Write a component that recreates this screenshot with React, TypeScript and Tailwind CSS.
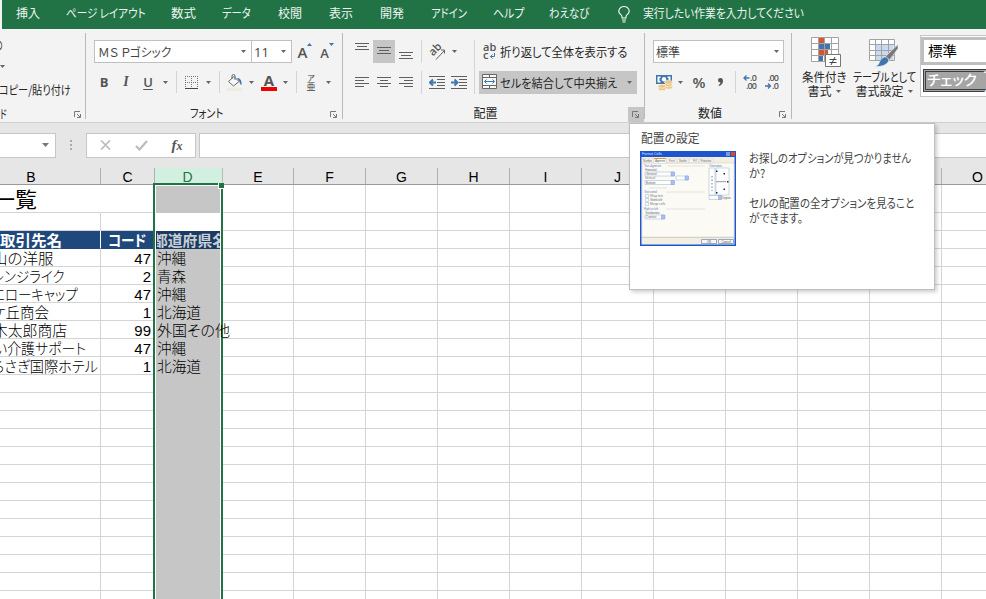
import { useLayoutEffect, useRef, useState, type ReactNode } from "react";
import clsx from "clsx";

// Keeps a label at a fixed width, squeezing the glyphs like a UI font does
const Fit = ({ w, children, className }: { w: number; children: string; className?: string }) => {
  const ref = useRef<HTMLSpanElement>(null);
  const [scale, setScale] = useState(1);

  useLayoutEffect(() => {
    if (ref.current) setScale(w / ref.current.offsetWidth);
  }, [w, children]);

  return (
    <span className={clsx("inline-block shrink-0 whitespace-nowrap", className)} style={{ width: w }}>
      <span
        ref={ref}
        className="inline-block origin-left [font-feature-settings:'palt']"
        style={{ transform: `scaleX(${scale})` }}
      >
        {children}
      </span>
    </span>
  );
};

const Caret = () => (
  <svg width="5" height="3" viewBox="0 0 5 3" className="shrink-0">
    <path d="M0 0h5L2.5 3z" fill="#666" />
  </svg>
);

const Cell = ({ className, children }: { className: string; children?: ReactNode }) => (
  <div className={clsx("flex h-full shrink-0 items-center justify-center", className)}>{children}</div>
);

const Sep = ({ className }: { className: string }) => (
  <Cell className={className}>
    <div className="h-full w-px bg-[#d4d4d4]" />
  </Cell>
);

const LauncherIcon = () => (
  <svg width="8" height="8" viewBox="0 0 8 8" fill="none" stroke="#777">
    <path d="M.5 6V.5H6M3 3l3 3M6.500 3v3.500H3" />
  </svg>
);

const Group = ({
  label,
  labelWidth,
  className,
  hovered,
  children,
}: {
  label: string;
  labelWidth: number;
  className: string;
  hovered?: boolean;
  children: ReactNode;
}) => (
  <div className={clsx("flex shrink-0 flex-col", className)}>
    <div className="flex h-[76px] shrink-0 flex-col">{children}</div>
    <div className="flex h-[17px] items-stretch">
      <div className="flex flex-1 items-center justify-center pb-px">
        <Fit w={labelWidth}>{label}</Fit>
      </div>
      <div className={clsx("mt-[2px] flex w-[16px] items-center justify-center", hovered && "bg-[#c6c6c6]")}>
        <LauncherIcon />
      </div>
    </div>
  </div>
);

const GroupLine = () => <div className="mt-[4px] h-[86px] w-px shrink-0 bg-[#b9b9b9]" />;

const Lines = ({ rows, size = 14 }: { rows: [number, number, number][]; size?: number }) => (
  <svg width={size} height="23" viewBox={`0 0 ${size} 23`} stroke="#5f5f5f">
    {rows.map(([x, y, w]) => (
      <path key={y} d={`M${x} ${y + 0.5}h${w}`} />
    ))}
  </svg>
);

const tabs = [
  { label: "挿入", width: 24, gap: "ml-[14px]" },
  { label: "ページ レイアウト", width: 80, gap: "ml-[26px]" },
  { label: "数式", width: 25, gap: "ml-[25px]" },
  { label: "データ", width: 29, gap: "ml-[26px]" },
  { label: "校閲", width: 24, gap: "ml-[27px]" },
  { label: "表示", width: 24, gap: "ml-[27px]" },
  { label: "開発", width: 24, gap: "ml-[27px]" },
  { label: "アドイン", width: 36, gap: "ml-[27px]" },
  { label: "ヘルプ", width: 31, gap: "ml-[26px]" },
  { label: "わえなび", width: 40, gap: "ml-[25px]" },
];

const TabBar = () => (
  <nav className="ml-[2px] flex h-[29px] shrink-0 items-center bg-[#217346] pb-[3px] text-[12px] text-[#eef5f0]">
    {tabs.map((tab) => (
      <div key={tab.label} className={clsx("flex", tab.gap)}>
        <Fit w={tab.width}>{tab.label}</Fit>
      </div>
    ))}
    <svg width="12" height="17" viewBox="0 0 12 17" fill="none" stroke="#fff" strokeWidth="1.1" className="mt-[3px] ml-[29px]">
      <path d="M4 12v-1.500C4 9 .8 8 .8 5.200a5.200 4.700 0 0 1 10.400 0C11.200 8 8 9 8 10.500V12zM4 14h4M4.500 16h3" />
    </svg>
    <Fit w={161} className="ml-[13px]">実行したい作業を入力してください</Fit>
  </nav>
);

const ClipboardGroup = () => (
  <div className="flex w-[85px] shrink-0 flex-col overflow-hidden">
    <div className="mt-[7px] flex h-[18px] items-center">
      <Fit w={8} className="-ml-[5px]">の</Fit>
    </div>
    <div className="mt-[9px] flex h-[6px] items-center">
      <Caret />
    </div>
    <div className="mt-[12px] flex h-[18px] items-center">
      <Fit w={72} className="-ml-px">コピー/貼り付け</Fit>
    </div>
    <div className="mt-[6px] flex h-[17px] items-center">
      <Fit w={7}>ド</Fit>
      <div className="mt-[2px] ml-[67px]">
        <LauncherIcon />
      </div>
    </div>
  </div>
);

const FontGroup = () => (
  <Group label="フォント" labelWidth={33} className="w-[256px]">
    <div className="mt-[11px] flex h-[23px] items-center pl-[8px]">
      <div className="flex h-full w-[158px] items-center justify-between border border-[#c0c0c0] bg-white pr-[5px] pl-[3px] text-[#444]">
        <Fit w={73}>ＭＳ Ｐゴシック</Fit>
        <Caret />
      </div>
      <div className="-ml-px flex h-full w-[41px] items-center justify-between border border-[#c0c0c0] bg-white pr-[5px] pl-[2px] font-['Open_Sans',sans-serif] text-[#444]">
        <Fit w={15} className="text-[13px]">11</Fit>
        <Caret />
      </div>
      <Cell className="ml-[5px] w-[16px]">
        <span className="mt-[2px] font-['Open_Sans',sans-serif] text-[15px] leading-none font-semibold text-[#555]">A</span>
        <svg width="5" height="3" viewBox="0 0 5 3" className="mb-[14px]"><path d="M0 3h5L2.500 0z" fill="#3e76ad" /></svg>
      </Cell>
      <Cell className="ml-[6px] w-[16px]">
        <span className="mt-[3px] font-['Open_Sans',sans-serif] text-[13px] leading-none font-semibold text-[#555]">A</span>
        <svg width="5" height="3" viewBox="0 0 5 3" className="mb-[14px]"><path d="M0 0h5L2.500 3z" fill="#3e76ad" /></svg>
      </Cell>
    </div>
    <div className="mt-[8px] flex h-[22px] items-center pl-[7px] font-['Open_Sans',sans-serif] text-[13px] text-[#555]">
      <Cell className="w-[22px] font-bold">B</Cell>
      <Cell className="w-[22px] font-['Liberation_Serif',serif] text-[14px] font-bold italic">I</Cell>
      <Cell className="w-[22px] font-semibold underline underline-offset-2">U</Cell>
      <Cell className="w-[12px]"><Caret /></Cell>
      <Sep className="w-[10px]" />
      <Cell className="w-[21px]">
        <svg width="13" height="13" viewBox="0 0 13 13" fill="none" stroke="#777">
          <path strokeDasharray="1 1" d="M0 .5h13M0 6.500h13M.5 0v13M6.500 0v13M12.500 0v13" />
          <path stroke="#444" d="M0 12.500h13" />
        </svg>
      </Cell>
      <Cell className="w-[12px]"><Caret /></Cell>
      <Sep className="w-[10px]" />
      <Cell className="w-[22px]">
        <svg width="16" height="17" viewBox="0 0 16 17" fill="none" stroke="#666">
          <path fill="#f9f9f9" d="M1.500 7.500 7 2.500l5 5-5.500 4.500zM5 5V2q0-1.500 1.500-1.500T8 2v4" />
          <path fill="#3e76ad" stroke="none" d="M10 4c3 0 5 2 4.500 7q-2-.5-2-3.500z" />
          <path fill="#eeece1" stroke="none" d="M0 13.500h15V17H0z" />
        </svg>
      </Cell>
      <Cell className="w-[11px]"><Caret /></Cell>
      <Cell className="w-[24px] flex-col">
        <span className="text-[15px] leading-[13px] font-bold">A</span>
        <div className="h-[4px] w-[16px] bg-[#f00000]" />
      </Cell>
      <Cell className="w-[9px]"><Caret /></Cell>
      <Sep className="w-[12px]" />
      <Cell className="w-[18px] flex-col font-['Noto_Sans_CJK_JP',sans-serif] text-[#444]">
        <span className="text-[8px] leading-[8px]">ア</span>
        <span className="text-[9px] leading-[9px]">亜</span>
      </Cell>
      <Cell className="ml-[2px] w-[12px]"><Caret /></Cell>
    </div>
  </Group>
);

const IndentIcon = ({ right }: { right?: boolean }) => (
  <svg width="17" height="15" viewBox="0 0 17 15" fill="none" stroke="#5f5f5f">
    <path d="M0 1.500h16M8 4.500h8M8 7.500h8M8 10.500h8M0 13.500h16" />
    <path stroke="#3e76ad" strokeWidth="2" d={right ? "M0 7.500h6M3.500 4.500l3 3-3 3" : "M7 7.500H1M4 4.500l-3 3 3 3"} />
  </svg>
);

const AlignmentGroup = () => (
  <Group label="配置" labelWidth={24} className="w-[301px]" hovered>
    <div className="mt-[11px] flex h-[54px]">
      <div className="flex w-[131px] shrink-0 flex-col justify-between">
        <div className="flex h-[23px] pl-[8px]">
          <Cell className="w-[22px]"><Lines rows={[[0, 3, 14], [2, 6, 10], [0, 9, 14]]} /></Cell>
          <Cell className="w-[22px] bg-[#c6c6c6]"><Lines rows={[[0, 7, 14], [2, 10, 10], [0, 13, 14]]} /></Cell>
          <Cell className="w-[22px]"><Lines rows={[[0, 12, 14], [2, 15, 10], [0, 18, 14]]} /></Cell>
          <Sep className="w-[9px]" />
          <Cell className="w-[22px]">
            <svg width="18" height="18" viewBox="0 0 18 18" fill="none" stroke="#5f5f5f">
              <text x="0" y="0" transform="translate(5 13.500) rotate(-45)" fill="#555" stroke="none" fontSize="11" fontWeight="600" fontFamily="Open Sans, sans-serif">ab</text>
              <path d="M8 16.500l8.500-9M13 7h3.500v3.500" />
            </svg>
          </Cell>
          <Cell className="w-[12px]"><Caret /></Cell>
        </div>
        <div className="flex h-[23px] pl-[8px]">
          <Cell className="w-[22px]"><Lines rows={[[0, 6, 14], [0, 9, 9], [0, 12, 14], [0, 15, 9]]} /></Cell>
          <Cell className="w-[22px]"><Lines rows={[[0, 6, 14], [3, 9, 8], [0, 12, 14], [3, 15, 8]]} /></Cell>
          <Cell className="w-[22px]"><Lines rows={[[0, 6, 14], [5, 9, 9], [0, 12, 14], [5, 15, 9]]} /></Cell>
          <Sep className="w-[9px]" />
          <Cell className="w-[23px]"><IndentIcon /></Cell>
          <Cell className="w-[21px]"><IndentIcon right /></Cell>
        </div>
      </div>
      <div className="flex flex-1 flex-col justify-between border-l border-[#d4d4d4]">
        <div className="flex h-[23px] items-center pl-[4px]">
          <Cell className="w-[21px]">
            <svg width="14" height="18" viewBox="0 0 14 18" fill="#555" className="mb-[2px]">
              <text x="0" y="9" fontSize="11" fontWeight="600" fontFamily="Open Sans, sans-serif">ab</text>
              <text x="0" y="17" fontSize="11" fontWeight="600" fontFamily="Open Sans, sans-serif">c</text>
              <path d="M11.500 11v3.500h-4M9.500 12.500l-2 2 2 2" fill="none" stroke="#3e76ad" />
            </svg>
          </Cell>
          <Fit w={128}>折り返して全体を表示する</Fit>
        </div>
        <div className="ml-[4px] flex h-[23px] w-[158px] items-center bg-[#c6c6c6]">
          <Cell className="w-[21px] pb-[2px]">
            <svg width="15" height="15" viewBox="0 0 15 15" fill="#f8f8f8" stroke="#666">
              <path d="M.5.5h14v14H.5zM.5 3.500h14M.5 11.500h14M7.500.5v3M7.500 11.500v3" />
              <path d="M2.500 7.500h10M4.500 5.500l-2 2 2 2M10.500 5.500l2 2-2 2" fill="none" stroke="#3e76ad" />
            </svg>
          </Cell>
          <Fit w={117}>セルを結合して中央揃え</Fit>
          <Cell className="ml-[5px] w-[14px]"><Caret /></Cell>
        </div>
      </div>
    </div>
  </Group>
);

const DecimalIcon = ({ more }: { more?: boolean }) => (
  <svg width="16" height="16" viewBox="0 0 16 16" fill="#555" fontSize="9" fontWeight="600" fontFamily="Open Sans, sans-serif">
    <text x={more ? "7" : "3"} y="7" textLength={more ? 7 : 11}>{more ? ".0" : ".00"}</text>
    <text x={more ? "3" : "7"} y="15" textLength={more ? 11 : 7}>{more ? ".00" : ".0"}</text>
    <path
      d={more ? "M6.500 4H1M3.500 1.500 1 4l2.500 2.500" : "M0 12h5.500M3 9.500 5.500 12 3 14.500"}
      fill="none"
      stroke="#3e76ad"
      strokeWidth="1.300"
    />
  </svg>
);

const NumberGroup = () => (
  <Group label="数値" labelWidth={24} className="w-[146px]">
    <div className="mt-[11px] ml-[8px] flex h-[23px] w-[131px] items-center justify-between border border-[#c0c0c0] bg-white pr-[4px] pl-[2px] text-[#444]">
      <Fit w={24}>標準</Fit>
      <Caret />
    </div>
    <div className="mt-[8px] flex h-[22px] items-center pl-[8px] text-[#555]">
      <Cell className="w-[22px]">
        <svg width="17" height="17" viewBox="0 0 17 17">
          <path fill="#3e76ad" d="M0 1h16v9H0z" />
          <path fill="#fff" d="M1.500 2.500h3V4h-1v3h1v1.500h-3zM14.500 2.500h-3V4h1v2h2z" />
          <circle cx="8" cy="5.300" r="2.200" fill="#fff" />
          <g fill="#efc37b" stroke="#f6f3ec" strokeWidth=".8">
            <ellipse cx="12.500" cy="13.300" rx="4" ry="1.900" />
            <ellipse cx="12.500" cy="10.800" rx="4" ry="1.900" />
            <ellipse cx="12.500" cy="8.300" rx="4" ry="1.900" />
            <ellipse cx="6" cy="14.800" rx="4" ry="1.900" />
            <ellipse cx="6" cy="12.300" rx="4" ry="1.900" />
          </g>
        </svg>
      </Cell>
      <Cell className="w-[10px]"><Caret /></Cell>
      <Cell className="ml-[3px] w-[22px] font-['Open_Sans',sans-serif] text-[15px] font-semibold">%</Cell>
      <Cell className="w-[20px]">
        <svg width="5" height="8" viewBox="0 0 5 8" className="mb-px"><path d="M2.500 0Q5 0 5 3 5 6.500 1 8L.5 7q2-1 2-2.500Q0 4.500 0 2.200T2.500 0" fill="#555" /></svg>
      </Cell>
      <Sep className="w-[10px]" />
      <Cell className="w-[22px]"><DecimalIcon more /></Cell>
      <Cell className="w-[22px]"><DecimalIcon /></Cell>
    </div>
  </Group>
);

const StylesGroup = () => (
  <div className="flex flex-1 overflow-hidden">
    <div className="mt-[8px] ml-[9px] flex w-[46px] shrink-0 flex-col items-center">
      <svg width="30" height="30" viewBox="0 0 30 30" className="ml-[3px]">
        <path fill="#fff" d="M.5.500h27v24H.5z" />
        <path fill="#d65532" d="M8 1h5v5H8zM8 13h9v6H8z" />
        <path fill="#3e76ad" d="M8 7h11v5H8zM8 19h4v5H8z" />
        <path fill="none" stroke="#a3a3a3" d="M.5.500h27v24H.5zM.5 6.500h27M.5 12.500h27M.5 18.500h27M7.500.500v24M13.500.500v24M20.500.500v24" />
        <path fill="#fff" stroke="#777" d="M14.500 17.500h15v12h-15z" />
        <path fill="none" stroke="#444" d="M18.500 22.500h7M18.500 25.500h7M24 20l-4 8" />
      </svg>
      <div className="mt-[3px] flex h-[14px] items-center"><Fit w={45}>条件付き</Fit></div>
      <div className="flex h-[14px] items-center gap-[4px]"><Fit w={24}>書式</Fit><Caret /></div>
    </div>
    <div className="mt-[8px] ml-[4px] flex w-[66px] shrink-0 flex-col items-center">
      <svg width="30" height="30" viewBox="0 0 30 30">
        <path fill="#fff" d="M.5 2.500h24v21H.5z" />
        <path fill="#c8daf0" d="M6.500 7.500h18v16h-18z" />
        <path fill="none" stroke="#a3a3a3" d="M.5 2.500h25v21H.5zM.5 7.500h25M.5 13.500h25M.5 18.500h25M6.500 2.500v21M12.500 2.500v21M19.500 2.500v21" />
        <path fill="#777" stroke="#eee" strokeWidth=".6" d="M29 7.500v4L20.500 23l-4.500-3z" />
        <path fill="#3e76ad" stroke="#eee" strokeWidth=".6" d="M15 20q5-.5 4.500 4.500Q16 30 6 29.500q4-1.500 4.500-4.500T15 20" />
      </svg>
      <div className="mt-[3px] flex h-[14px] items-center"><Fit w={63}>テーブルとして</Fit></div>
      <div className="flex h-[14px] items-center gap-[4px]"><Fit w={48}>書式設定</Fit><Caret /></div>
    </div>
    <div className="mt-[6px] ml-[3px] flex h-[62px] w-[80px] shrink-0 flex-col border border-[#c6c6c6] bg-white font-['Noto_Sans_CJK_JP',sans-serif] text-[14px] text-black">
      <div className="mt-px flex h-[28px] items-center border-[3px] border-[#bfbfbf] pb-[3px] pl-[4px]">
        <Fit w={29}>標準</Fit>
      </div>
      <div className="mt-[4px] ml-[2px] flex h-[23px] items-center border-[3px] border-double border-[#3f3f3f] bg-[#a5a5a5] pb-[4px] pl-px text-white">
        <Fit w={50} className="font-medium">チェック</Fit>
        <span className="ml-[6px]">セル</span>
      </div>
    </div>
  </div>
);

const FormulaBar = () => (
  <div className="flex h-[45px] shrink-0 bg-[#e6e6e6] pt-[10px]">
    <div className="flex h-[25px] w-[56px] items-center justify-end border border-l-0 border-[#c6c6c6] bg-white pr-[6px] pb-[2px]">
      <svg width="7" height="4" viewBox="0 0 7 4"><path d="M0 0h7L3.500 4z" fill="#777" /></svg>
    </div>
    <div className="flex h-[25px] w-[30px] flex-col items-center justify-center gap-[2px] pb-px">
      <i className="size-[2px] bg-[#aaa]" />
      <i className="size-[2px] bg-[#aaa]" />
      <i className="size-[2px] bg-[#aaa]" />
    </div>
    <div className="flex h-[25px] w-[110px] items-center border border-[#c6c6c6] bg-white pb-px">
      <Cell className="w-[36px]">
        <svg width="11" height="10" viewBox="0 0 11 10" stroke="#bcbcbc" strokeWidth="1.700"><path d="M1 .5l9 9M10 .5l-9 9" /></svg>
      </Cell>
      <Cell className="w-[36px]">
        <svg width="13" height="11" viewBox="0 0 13 11" fill="none" stroke="#bcbcbc" strokeWidth="2.200"><path d="M1 6l3.500 3.500L12 1" /></svg>
      </Cell>
      <Cell className="w-[36px] pb-px font-['Liberation_Serif',serif] text-[15px] font-bold text-[#555] italic">
        f<span className="mt-[3px] text-[12px]">x</span>
      </Cell>
    </div>
    <div className="ml-[3px] h-[25px] flex-1 border border-r-0 border-[#c6c6c6] bg-white" />
  </div>
);

const columns = [
  { name: "B", width: "w-[101px]", pad: "pr-[38px]" },
  { name: "C", width: "w-[54px]", pad: "" },
  { name: "D", width: "w-[68px]", pad: "pr-[2px]" },
  { name: "E", width: "w-[71px]", pad: "" },
  ...["F", "G", "H", "I", "J", "K", "L", "M", "N", "O"].map((name) => ({ name, width: "w-[72px]", pad: "" })),
];

const records = [
  { name: "山の洋服", shift: "-ml-[8px]", width: 61, code: "47", pref: "沖縄", prefWidth: 29 },
  { name: "レンジライク", shift: "-ml-[8px]", width: 73, code: "2", pref: "青森", prefWidth: 29 },
  { name: "エローキャップ", shift: "-ml-[8px]", width: 86, code: "47", pref: "沖縄", prefWidth: 29 },
  { name: "ケ丘商会", shift: "-ml-[8px]", width: 57, code: "1", pref: "北海道", prefWidth: 44 },
  { name: "木太郎商店", shift: "-ml-[7px]", width: 74, code: "99", pref: "外国その他", prefWidth: 73 },
  { name: "い介護サポート", shift: "-ml-[6px]", width: 92, code: "47", pref: "沖縄", prefWidth: 29 },
  { name: "らさぎ国際ホテル", shift: "-ml-[8px]", width: 106, code: "1", pref: "北海道", prefWidth: 44 },
];

const Row = ({
  height,
  b,
  c,
  d,
  bClass,
  cClass,
  dClass = "bg-[#c6c6c6] border-[#c6c6c6]",
}: {
  height: string;
  b?: ReactNode;
  c?: ReactNode;
  d?: ReactNode;
  bClass?: string;
  cClass?: string;
  dClass?: string;
}) => (
  <div className={clsx("flex shrink-0", height)}>
    {columns.map(({ name, width }) => (
      <div
        key={name}
        className={clsx(
          "flex shrink-0 items-center border-r border-b whitespace-nowrap",
          width,
          name === "B" && (bClass ?? "border-[#d4d4d4]"),
          name === "C" && ["justify-end pr-[3px]", cClass ?? "border-[#d4d4d4]"],
          name === "D" && ["pl-[2px]", dClass],
          name > "D" && "border-[#d4d4d4]",
        )}
      >
        {name === "B" && b}
        {name === "C" && c}
        {name === "D" && d}
      </div>
    ))}
  </div>
);

const Sheet = () => (
  <div className="relative flex w-[986px] flex-1 flex-col overflow-hidden bg-white font-['Noto_Sans_CJK_JP',sans-serif] text-[15px] leading-none font-light text-black">
    <div className="flex h-[17px] shrink-0 border-b border-[#999] bg-[#e6e6e6] font-['Liberation_Sans',sans-serif] text-[14px] font-normal">
      {columns.map(({ name, width, pad }) => (
        <div
          key={name}
          className={clsx(
            "flex shrink-0 items-center justify-center border-r pt-[2px]",
            width,
            pad,
            name === "D" ? "border-[#bbb] bg-[#d2f0e0] text-[#217346]" : "border-[#b0b0b0]",
          )}
        >
          {name}
        </div>
      ))}
    </div>
    <Row
      height="h-[28px]"
      b={<Fit w={44} className="-ml-[7px] text-[21px] font-normal">一覧</Fit>}
      bClass="border-b-[#d4d4d4] border-r-white"
    />
    <Row height="h-[18px]" dClass="border-white" />
    <Row
      height="h-[18px]"
      b={<Fit w={62} className="font-bold text-white">取引先名</Fit>}
      c={<Fit w={38} className="mr-[5px] font-bold text-white">コード</Fit>}
      d={
        <div className="flex w-[65px] justify-center overflow-hidden py-px">
          <Fit w={74} className="font-bold text-[#c9ced6]">都道府県名</Fit>
        </div>
      }
      bClass="bg-[#1f497d] border-b-[#1f497d] border-r-white"
      cClass="bg-[#1f497d] border-[#1f497d]"
      dClass="bg-[#1b3a62] border-[#1b3a62]"
    />
    {records.map((r) => (
      <Row
        key={r.name}
        height="h-[18px]"
        b={<Fit w={r.width} className={r.shift}>{r.name}</Fit>}
        c={<span className="pt-[2px] font-['Liberation_Sans',sans-serif] font-normal">{r.code}</span>}
        d={<Fit w={r.prefWidth} className="relative z-10">{r.pref}</Fit>}
      />
    ))}
    {Array.from({ length: 13 }, (_, i) => (
      <Row key={i} height="h-[18px]" />
    ))}
    {/* Column selection */}
    <div className="absolute top-[15px] left-[153px] h-[440px] w-[70px] border-2 border-[#217346]">
      <div className="h-full border border-white" />
    </div>
    <div className="absolute top-[15px] left-[218px] size-[6px] border-b border-l border-white bg-[#217346]" />
  </div>
);

const DialogPreview = () => (
  <svg width="96" height="95" viewBox="0 0 96 95" className="shrink-0" fontFamily="Liberation Sans, sans-serif" fontSize="3">
    <path fill="#1d55d0" d="M0 0h96v95H0z" />
    <path fill="#f2efe2" d="M1.500 6h93v87.500h-93z" />
    <path fill="#d8472c" d="M91 1h4v4h-4z" />
    <path fill="#7399ea" d="M86 1h4v4h-4z" />
    <text x="2" y="4.300" fill="#dfe8fb" fontSize="3.500">Format Cells</text>
    <path fill="#fbfaf5" stroke="#d3cfbf" strokeWidth=".5" d="M2 12h92v74H2zM2 8h12v4H2zM27 8h10v4H27zM37 8h12v4H37zM49 8h10v4H49zM59 8h14v4H59z" />
    <path fill="#fff" stroke="#d3cfbf" strokeWidth=".5" d="M14 7.500h12v5H14z" />
    <path fill="#e5972d" d="M14 7h12v1H14z" />
    <g fill="#777">
      <text x="3" y="11" textLength="9">Number</text>
      <text x="15" y="11" textLength="10">Alignment</text>
      <text x="29" y="11">Font</text>
      <text x="39" y="11" textLength="8">Border</text>
      <text x="53" y="11">Fill</text>
      <text x="60.500" y="11" textLength="11">Protection</text>
      <text x="5" y="20" textLength="12">Horizontal:</text>
      <text x="5" y="28.300">Vertical:</text>
      <text x="10" y="46.300">Wrap text</text>
      <text x="10" y="50.300" textLength="12">Shrink to fit</text>
      <text x="10" y="54.300">Merge cells</text>
      <text x="5" y="63" textLength="15">Text direction:</text>
      <text x="82" y="47.500" textLength="9">Degrees</text>
    </g>
    <g fill="#6d88c4">
      <text x="4" y="16" textLength="17">Text alignment</text>
      <text x="69" y="16" textLength="13">Orientation</text>
      <text x="4" y="42" textLength="13">Text control</text>
      <text x="4" y="59" textLength="14">Right-to-left</text>
    </g>
    <path stroke="#d8d4c4" strokeWidth=".6" d="M28 15h37M26 41h39M26 58h39M9 37h18" />
    <g fill="#fff" stroke="#a9bcd6" strokeWidth=".6">
      <path d="M5 21h29v4H5zM5 29.500h29v4H5zM36 25h12v4H36zM5 64h19v4H5zM69 17h6v27h-6zM76 17h13v27H76zM69 44.500h12v4H69z" />
      <path d="M5.500 43.500h3v3h-3zM5.500 47.500h3v3h-3zM5.500 51.500h3v3h-3z" />
    </g>
    <path fill="#a9c0f2" stroke="#7f9fdc" strokeWidth=".5" d="M31 21h3.500v4H31zM31 29.500h3.500v4H31zM45 25h3.500v4H45zM21.500 64h3.500v4h-3.500zM78.500 44.500h3v4h-3z" />
    <g fill="#666">
      <text x="6" y="24.200">General</text>
      <text x="6" y="32.700">Bottom</text>
      <text x="6" y="67.200">Context</text>
    </g>
    <path fill="#223" d="M76 19.500h1.500V21H76zM83.500 22H85v1.500h-1.500zM87 30h1.500v1.500H87zM83.500 37.500H85V39h-1.500zM76 41h1.500v1.500H76z" />
    <path d="M76 30.700h10" stroke="#555" strokeWidth=".6" />
    <path stroke="#777" strokeWidth="1" strokeDasharray="1.500 2" d="M72 25v15" />
    <path stroke="#c9c5b4" strokeWidth=".6" d="M2 86.500h92" />
    <path fill="#f8f7f2" stroke="#6f88b0" strokeWidth=".7" d="M61.500 88.500h15v4h-15zM78.500 88.500h15v4h-15z" />
    <text x="67" y="91.700" fill="#555">OK</text>
    <text x="81.500" y="91.700" fill="#555">Cancel</text>
  </svg>
);

const Tooltip = () => (
  <div className="absolute top-[123px] left-[629px] z-20 flex h-[167px] w-[306px] flex-col border border-[#bebebe] bg-white pl-[10px] text-[12px] leading-[15px] text-[#444] shadow-[2px_2px_4px_rgba(0,0,0,0.2)]">
    <div className="mt-[5px] flex h-[16px] items-center pl-px">
      <Fit w={59}>配置の設定</Fit>
    </div>
    <div className="mt-[6px] flex gap-[13px]">
      <DialogPreview />
      <div className="-mt-px flex flex-col">
        <Fit w={162}>お探しのオプションが見つかりません</Fit>
        <Fit w={16}>か?</Fit>
        <Fit w={165} className="mt-[15px]">セルの配置の全オプションを見ること</Fit>
        <Fit w={54}>ができます。</Fit>
      </div>
    </div>
  </div>
);

export default function App() {
  return (
    <div className="relative flex h-[599px] w-[986px] flex-col overflow-hidden bg-[#f3f3f3] font-['Noto_Sans_CJK_JP',sans-serif] text-[12px] leading-[14px] text-[#262626]">
      <TabBar />
      <div className="flex h-[94px] shrink-0 border-b border-[#cfcfcf]">
        <ClipboardGroup />
        <GroupLine />
        <FontGroup />
        <GroupLine />
        <AlignmentGroup />
        <GroupLine />
        <NumberGroup />
        <GroupLine />
        <StylesGroup />
      </div>
      <FormulaBar />
      <Sheet />
      <Tooltip />
    </div>
  );
}
